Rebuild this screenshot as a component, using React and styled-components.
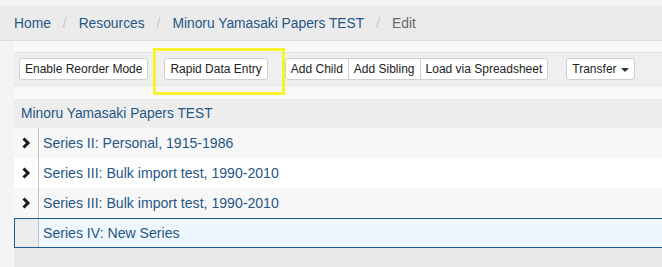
import React from 'react';
import styled, { createGlobalStyle } from 'styled-components';

const GlobalStyle = createGlobalStyle`
  html, body {
    margin: 0;
    padding: 0;
    overflow: hidden;
    background: #f4f4f4;
    font-family: "Liberation Sans", Helvetica, Arial, sans-serif;
  }
`;

const crumbs = ['Home', 'Resources', 'Minoru Yamasaki Papers TEST'];

const rows = [
  { title: 'Series II: Personal, 1915-1986', children: true },
  { title: 'Series III: Bulk import test, 1990-2010', children: true },
  { title: 'Series III: Bulk import test, 1990-2010', children: true },
  { title: 'Series IV: New Series', children: false, selected: true },
];

const Chevron = () => (
  <svg width="10" height="12" viewBox="0 0 10 12">
    <polyline points="2.5,1.5 7,6 2.5,10.5" fill="none" stroke="#1b1b1b" strokeWidth="3" />
  </svg>
);

const App = () => {
  return (
    <Page>
      <GlobalStyle />
      <TopStrip />
      <Breadcrumb>
        {crumbs.map((c) => (
          <React.Fragment key={c}>
            <CrumbLink>{c}</CrumbLink>
            <Sep>/</Sep>
          </React.Fragment>
        ))}
        <CrumbActive>Edit</CrumbActive>
      </Breadcrumb>

      <Main>
        <Toolbar>
          <Button>Enable Reorder Mode</Button>
          <Highlight>
            <Button>Rapid Data Entry</Button>
          </Highlight>
          <ButtonGroup>
            <GroupButton>Add Child</GroupButton>
            <GroupButton>Add Sibling</GroupButton>
            <GroupButton>Load via Spreadsheet</GroupButton>
          </ButtonGroup>
          <Button>
            Transfer <Caret />
          </Button>
        </Toolbar>

        <Tree>
          <TreeHeader>Minoru Yamasaki Papers TEST</TreeHeader>
          {rows.map((r, i) => (
            <Row key={i} $odd={i % 2 === 0} $selected={r.selected}>
              <Expander $selected={r.selected}>{r.children && <Chevron />}</Expander>
              <RowTitle>{r.title}</RowTitle>
            </Row>
          ))}
        </Tree>
      </Main>
    </Page>
  );
};

export default App;

const Page = styled.div`
  width: 680px;
  height: 267px;
  display: flex;
  flex-direction: column;
`;

const TopStrip = styled.div`
  height: 5px;
  background: #f5f5f5;
`;

const Breadcrumb = styled.div`
  display: flex;
  align-items: center;
  padding: 2px 0 0 14px;
  box-sizing: border-box;
  height: 36px;
  background: #ebebeb;
  border-bottom: 1px solid #dcdcdc;
  font-size: 13.8px;
`;

const CrumbLink = styled.span`
  color: #265685;
`;

const Sep = styled.span`
  color: #c8c8c8;
  margin: 0 12px;
`;

const CrumbActive = styled.span`
  color: #6a6a6a;
`;

const Main = styled.div`
  flex: 1;
  display: flex;
  flex-direction: column;
  margin-left: 14px;
  padding-top: 11px;
  background: #f8f8f8;
`;

const Toolbar = styled.div`
  height: 32px;
  display: flex;
  align-items: center;
  padding: 0 5px;
  background: #efefef;
  border-top: 1px solid #e4e4e4;
  border-bottom: 1px solid #e6e6e6;
`;

const Button = styled.button`
  height: 22px;
  padding: 0 5px;
  background: #fff;
  border: 1px solid #cfcfcf;
  border-radius: 3px;
  font-family: inherit;
  font-size: 12px;
  color: #222;
  display: inline-flex;
  align-items: center;
  gap: 4px;
  margin-right: 16px;
`;

const Highlight = styled.span`
  position: relative;
  display: inline-flex;
  margin-right: 17px;

  ${Button} {
    margin-right: 0;
  }

  &::after {
    content: '';
    position: absolute;
    left: -11px;
    right: -17px;
    top: -10px;
    bottom: -15px;
    border: 3px solid #f6f22c;
    pointer-events: none;
  }
`;

const ButtonGroup = styled.div`
  display: inline-flex;
  margin-right: 18px;
`;

const GroupButton = styled(Button)`
  margin-right: 0;
  border-radius: 0;
  margin-left: -1px;

  &:first-child {
    margin-left: 0;
    border-radius: 3px 0 0 3px;
  }

  &:last-child {
    border-radius: 0 3px 3px 0;
  }
`;

const Caret = styled.span`
  width: 0;
  height: 0;
  border-left: 4px solid transparent;
  border-right: 4px solid transparent;
  border-top: 4px solid #333;
  margin-top: 1px;
`;

const Tree = styled.div`
  flex: 1;
  margin-top: 13px;
  background: #e9e9e9;
`;

const TreeHeader = styled.div`
  height: 29px;
  display: flex;
  align-items: center;
  padding-left: 7px;
  background: #ededed;
  color: #265685;
  font-size: 13.8px;
`;

const Row = styled.div`
  height: ${(p) => (p.$selected ? '28px' : '30px')};
  display: flex;
  align-items: stretch;
  background: ${(p) => (p.$selected ? '#eef7fe' : p.$odd ? '#f7f7f7' : '#ffffff')};
  border: ${(p) => (p.$selected ? '1px solid #1d5b93' : 'none')};
  border-right: none;
`;

const Expander = styled.div`
  width: ${(p) => (p.$selected ? '23px' : '24px')};
  display: flex;
  align-items: center;
  justify-content: center;
  border-right: 1px solid #c4c4c4;
  background: ${(p) => (p.$selected ? '#ececec' : 'inherit')};
`;

const RowTitle = styled.div`
  display: flex;
  align-items: center;
  padding-left: 4px;
  color: #265685;
  font-size: 14.1px;
`;
